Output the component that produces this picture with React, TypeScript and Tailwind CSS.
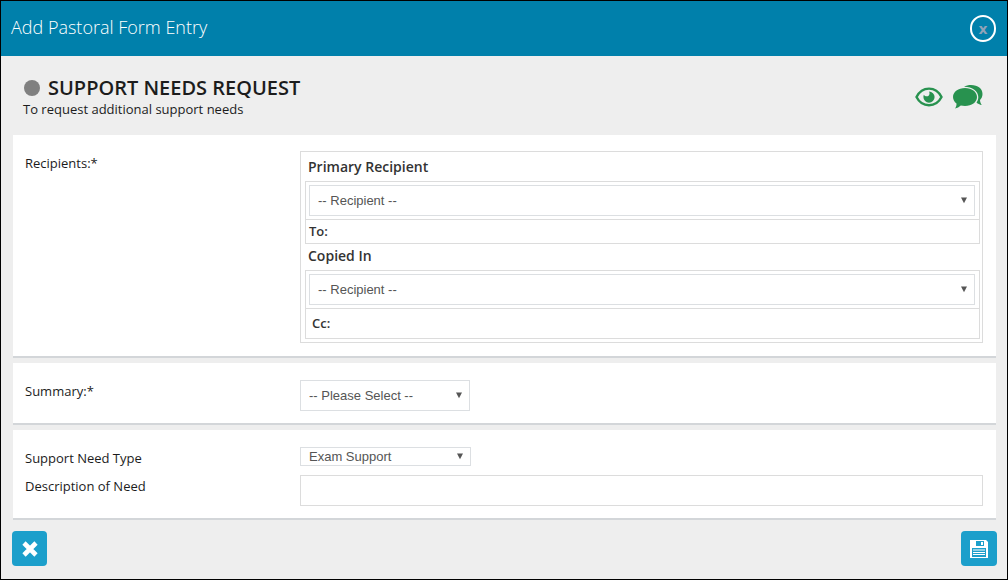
import React, { useState } from 'react';

interface SelectBoxProps {
  id: string;
  value: string;
  onChange: (value: string) => void;
  options: string[];
  className: string;
}

function SelectBox({ id, value, onChange, options, className }: SelectBoxProps) {
  return (
    <div className={`relative ${className}`}>
      <select
        id={id}
        value={value}
        onChange={(e) => onChange(e.target.value)}
        className="block h-full w-full appearance-none border border-[#dcdfe2] bg-white pl-2 pr-6 font-['Liberation_Sans',Arial,sans-serif] text-[13px] text-[#555]"
      >
        {options.map((option) => (
          <option key={option}>{option}</option>
        ))}
      </select>
      <svg
        viewBox="0 0 7 8"
        className="pointer-events-none absolute inset-y-0 right-[7px] my-auto h-2 w-[7px] fill-[#555]"
      >
        <path d="M0 0.500h6L3 6.300z" />
      </svg>
    </div>
  );
}

export default function App() {
  const [primary, setPrimary] = useState('-- Recipient --');
  const [copied, setCopied] = useState('-- Recipient --');
  const [summary, setSummary] = useState('-- Please Select --');
  const [needType, setNeedType] = useState('Exam Support');
  const [description, setDescription] = useState('');

  return (
    <div className="flex min-h-screen flex-col border border-black bg-[#eee] font-['Open_Sans',sans-serif] text-[13px] leading-[18px] text-[#1c1c1c]">
      <header className="flex h-[55px] items-center justify-between bg-[#0080ab] pl-[10px] pr-[11px]">
        <h1 className="pb-[3px] text-[18px] font-light text-white">Add Pastoral Form Entry</h1>
        <button
          aria-label="Close"
          className="flex h-[27px] w-[26px] items-center justify-center rounded-full border-2 border-white"
        >
          <span className="font-['DejaVu_Sans',sans-serif] text-[14px] font-bold text-[#8fa3b8]">x</span>
        </button>
      </header>

      <div className="flex items-center justify-between pb-[17px] pl-[22px] pr-6 pt-5">
        <div>
          <div className="flex items-center gap-2 pl-px">
            <span className="h-4 w-4 rounded-full bg-[#808080]" />
            <h2 className="text-[20px] font-semibold leading-6">SUPPORT NEEDS REQUEST</h2>
          </div>
          <p>To request additional support needs</p>
        </div>
        <div className="flex items-center gap-[10px] text-[#28924f]">
          <button aria-label="View">
            <svg viewBox="0 0 28 20" className="h-5 w-7">
              <path
                d="M1.500 10C4 5 8.500 1.600 14 1.600S24 5 26.500 10C24 15 19.500 18.200 14 18.200S4 15 1.500 10z"
                fill="none"
                stroke="currentColor"
                strokeWidth="2.400"
              />
              <path
                d="M14 4.500a5.600 5.600 0 1 1-5.600 5.600c0-.9.2-1.700.5-2.400 1 1.800 3.600 2.200 4.900.7 1-1.200.9-2.800.2-3.900z"
                fill="currentColor"
              />
            </svg>
          </button>
          <button aria-label="Comments">
            <svg viewBox="0 0 30 24" className="h-6 w-[30px]" fill="currentColor">
              <path d="M12 3c6.600 0 12 3.800 12 9s-5.400 9-12 9c-1.500 0-2.900-.2-4.200-.5C6 22 4.300 23 2 23.500c1-1.300 1.600-3 1.500-5C1.300 16.800 0 14.600 0 12 0 6.800 5.400 3 12 3z" />
              <path d="M11 1.700C13 .6 15.500 0 18 0 25 0 29.500 3.600 29.500 9c0 2.600-1 4.500-2.500 6 .1 2 .8 3.700 1.800 5-2-.3-4-1.200-5.300-2.500 1.200-1.600 1.800-3.500 1.800-5.500C25.300 6 19.500 1.700 11 1.700z" />
            </svg>
          </button>
        </div>
      </div>

      <main className="ml-3 mr-[11px] flex flex-col gap-[5px]">
        <section className="grid grid-cols-[275px_1fr] border-b-2 border-[#d3d6d9] bg-white pb-[13px] pl-3 pr-[13px] pt-4">
          <span className="pt-[3px]">Recipients:*</span>
          <div className="border border-[#dcdcdc] pb-[3px] pl-1 pr-[2px] text-[#333]">
            <label htmlFor="primary" className="block px-[3px] py-[5px] text-[14px] font-semibold leading-[19px]">
              Primary Recipient
            </label>
            <div className="border border-[#dcdcdc]">
              <div className="py-[3px] pl-[3px] pr-1">
                <SelectBox
                  id="primary"
                  value={primary}
                  onChange={setPrimary}
                  options={['-- Recipient --']}
                  className="h-[31px]"
                />
              </div>
              <div className="h-6 border-t border-[#dcdcdc] px-[3px] pt-[2px] font-semibold">To:</div>
            </div>
            <label htmlFor="copied" className="block px-[3px] pb-[5px] pt-[2px] text-[14px] font-semibold leading-[19px]">
              Copied In
            </label>
            <div className="border border-[#dcdcdc]">
              <div className="py-[3px] pl-[3px] pr-1">
                <SelectBox
                  id="copied"
                  value={copied}
                  onChange={setCopied}
                  options={['-- Recipient --']}
                  className="h-[31px]"
                />
              </div>
              <div className="border-t border-[#dcdcdc] px-[6px] pb-[6px] pt-[5px] font-semibold">Cc:</div>
            </div>
          </div>
        </section>

        <section className="grid grid-cols-[275px_1fr] border-b-2 border-[#d3d6d9] bg-white pb-3 pl-3 pr-[13px] pt-[17px]">
          <label htmlFor="summary" className="pt-[2px]">Summary:*</label>
          <SelectBox
            id="summary"
            value={summary}
            onChange={setSummary}
            options={['-- Please Select --']}
            className="h-[31px] w-[170px]"
          />
        </section>

        <section className="grid grid-cols-[275px_1fr] gap-y-2 border-b-2 border-[#d3d6d9] bg-white pb-3 pl-3 pr-[13px] pt-[17px]">
          <label htmlFor="needType" className="pt-[2px]">Support Need Type</label>
          <SelectBox
            id="needType"
            value={needType}
            onChange={setNeedType}
            options={['Exam Support']}
            className="h-[19px] w-[171px]"
          />
          <label htmlFor="description" className="pt-[2px]">Description of Need</label>
          <input
            id="description"
            type="text"
            value={description}
            onChange={(e) => setDescription(e.target.value)}
            className="h-[31px] w-full border border-[#dcdcdc] bg-white px-2"
          />
        </section>
      </main>

      <footer className="flex items-center justify-between pb-3 pl-[11px] pr-[10px] pt-[11px]">
        <button
          aria-label="Cancel"
          className="flex h-[35px] w-[35px] items-center justify-center rounded bg-[#1c9fcb]"
        >
          <svg viewBox="0 0 16 16" className="h-4 w-4" fill="none" stroke="#fff" strokeWidth="4.600">
            <path d="M2 2l12 12M14 2L2 14" />
          </svg>
        </button>
        <button
          aria-label="Save"
          className="flex h-[35px] w-9 items-center justify-center rounded bg-[#1c9fcb]"
        >
          <svg viewBox="0 0 18 18" className="h-[18px] w-[18px]">
            <path d="M0 0h16l2 2v16H0z" fill="#fff" />
            <path d="M6 1h8v5H6zM2 8h14v9H2z" fill="#1c9fcb" />
            <path d="M11 2h2v3h-2z" fill="#fff" />
            <path d="M3 9h12v2H3z" fill="#8fd0e6" />
            <path d="M3 12h12v1H3zM3 14h12v1H3z" fill="#fff" />
          </svg>
        </button>
      </footer>
    </div>
  );
}
